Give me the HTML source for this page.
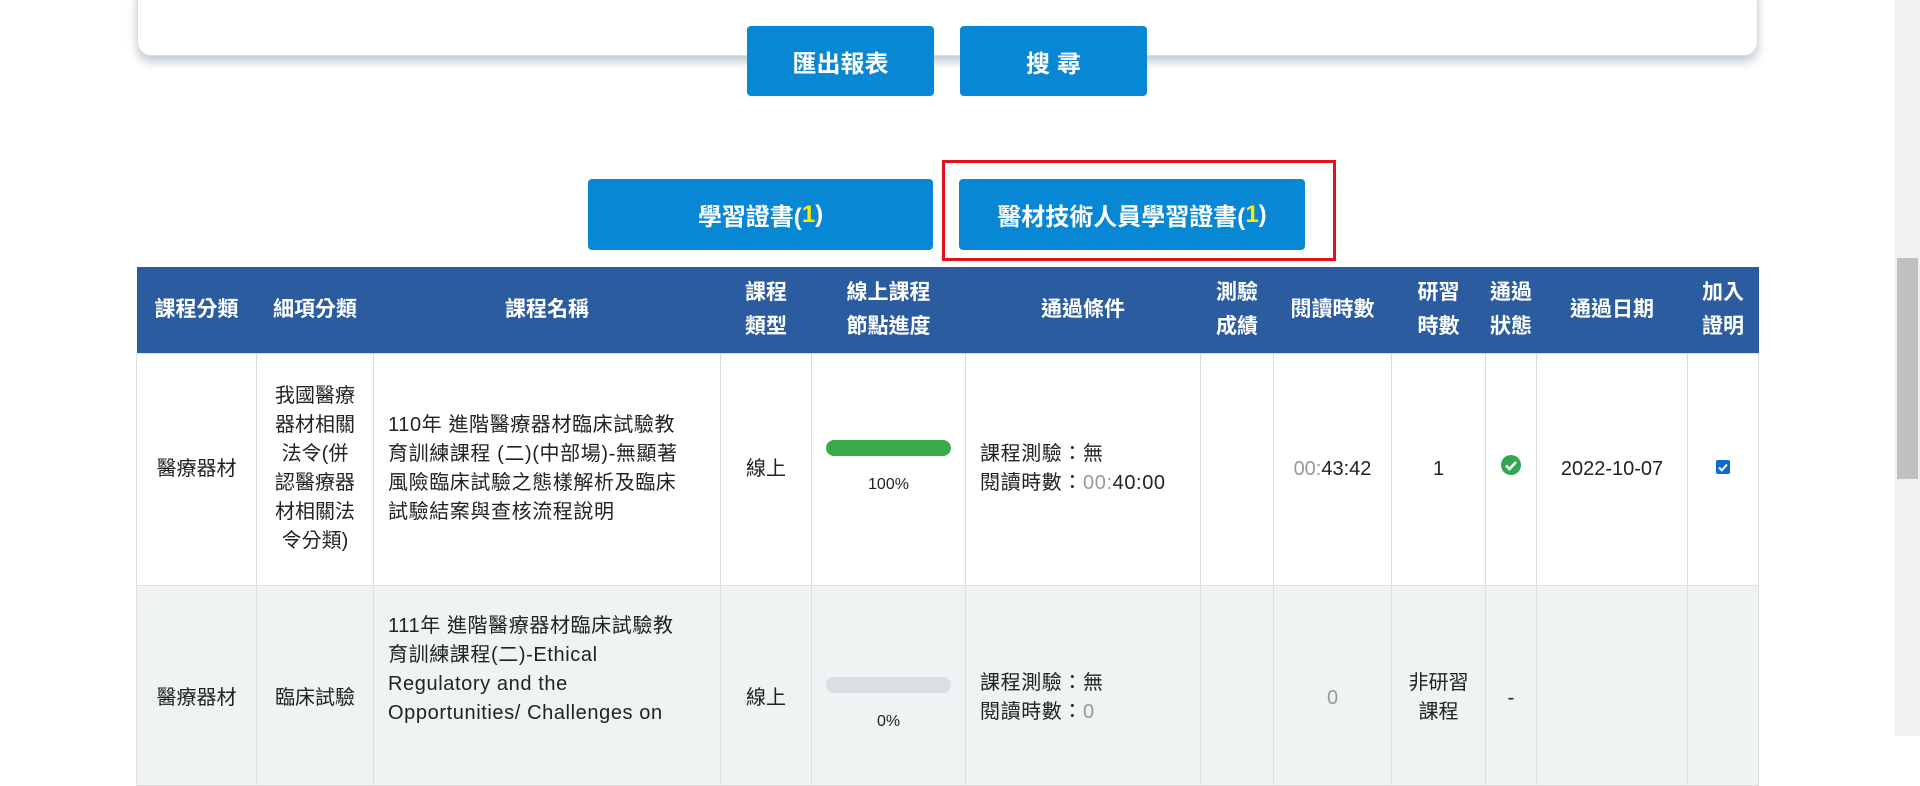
<!DOCTYPE html>
<html><head><meta charset="utf-8"><style>
*{box-sizing:border-box;margin:0;padding:0}
body{width:1920px;height:736px;overflow:hidden;background:#fff;font-family:"Liberation Sans","Noto Sans CJK TC",sans-serif;color:#222;position:relative}
.card{position:absolute;left:137px;top:-20px;width:1621px;height:76px;background:#fff;border:1px solid #d8dde2;border-radius:14px;box-shadow:0 6px 10px rgba(120,140,160,.45)}
.btn{position:absolute;background:#0887d4;color:#fff;font-weight:bold;font-size:24px;display:flex;align-items:center;justify-content:center;border-radius:4px}
.y{color:#ffeb00}
.red{position:absolute;left:942px;top:160px;width:394px;height:101px;border:3px solid #e3111b}
table{position:absolute;left:136px;top:267px;width:1622px;border-collapse:collapse;table-layout:fixed;font-size:20px}
th{background:#2b5c9f;color:#fff;font-weight:bold;font-size:21px;height:86px;line-height:34px;text-align:center;padding:0 2px}
td{border:1px solid #ddd;text-align:center;line-height:29px;padding:0 12px;white-space:nowrap}
tr.r1 td{height:232px;background:#fff}
tr.r2 td{height:200px;background:#eef3f3;vertical-align:top;padding-top:0}
td.l{text-align:left;padding:0 14px;letter-spacing:0.6px}
.bar{height:16px;border-radius:8px;margin:0 4px}
.g{color:#999}
.sb{position:absolute;left:1895px;top:0;width:25px;height:736px;background:#f1f1f1}
.th{position:absolute;left:1897px;top:258px;width:21px;height:221px;background:#c1c1c1}
</style></head><body>
<div class="card"></div>
<div class="btn" style="left:747px;top:26px;width:187px;height:70px">匯出報表</div>
<div class="btn" style="left:960px;top:26px;width:187px;height:70px">搜 尋</div>
<div class="btn" style="left:588px;top:179px;width:345px;height:71px">學習證書(<span class="y">1</span>)</div>
<div class="btn" style="left:959px;top:179px;width:346px;height:71px">醫材技術人員學習證書(<span class="y">1</span>)</div>
<div class="red"></div>
<table>
<colgroup><col style="width:120px"><col style="width:117px"><col style="width:347px"><col style="width:91px"><col style="width:154px"><col style="width:235px"><col style="width:73px"><col style="width:118px"><col style="width:94px"><col style="width:51px"><col style="width:151px"><col style="width:71px"></colgroup>
<tr><th>課程分類</th><th>細項分類</th><th>課程名稱</th><th>課程<br>類型</th><th>線上課程<br>節點進度</th><th>通過條件</th><th>測驗<br>成績</th><th>閱讀時數</th><th>研習<br>時數</th><th>通過<br>狀態</th><th>通過日期</th><th>加入<br>證明</th></tr>
<tr class="r1"><td style="padding:0 4px">醫療器材</td><td style="padding:0 4px">我國醫療<br>器材相關<br>法令(併<br>認醫療器<br>材相關法<br>令分類)</td><td class="l">110年 進階醫療器材臨床試驗教<br>育訓練課程 (二)(中部場)-無顯著<br>風險臨床試驗之態樣解析及臨床<br>試驗結案與查核流程說明</td><td>線上</td><td style="padding:0 10px"><div class="bar" style="background:#3aaa48"></div><div style="font-size:16px;margin-top:14px">100%</div></td><td class="l">課程測驗：無<br>閱讀時數：<span class="g">00:</span>40:00</td><td></td><td><span class="g">00:</span>43:42</td><td>1</td><td style="padding:0"><svg width="22" height="22" viewBox="0 0 22 22"><circle cx="11" cy="11" r="10" fill="#2fa84f"/><path d="M6 11.5l3.5 3.5 6.5-7" stroke="#fff" stroke-width="2.6" fill="none"/></svg></td><td>2022-10-07</td><td><svg width="16" height="16" viewBox="0 0 16 16"><rect x="1" y="1" width="14" height="14" rx="2" fill="#0b68d8"/><path d="M4 8.5l2.8 2.8L12 5.5" stroke="#fff" stroke-width="2" fill="none"/></svg></td></tr>
<tr class="r2"><td style="padding:98px 4px 0">醫療器材</td><td style="padding-top:98px">臨床試驗</td><td class="l" style="padding-top:26px">111年 進階醫療器材臨床試驗教<br>育訓練課程(二)-Ethical<br>Regulatory and the<br>Opportunities/ Challenges on</td><td style="padding-top:98px">線上</td><td style="padding:91px 10px 0"><div class="bar" style="background:#d9dfe4"></div><div style="font-size:16px;margin-top:14px">0%</div></td><td class="l" style="padding-top:83px">課程測驗：無<br>閱讀時數：<span class="g">0</span></td><td></td><td class="g" style="padding-top:98px">0</td><td style="padding:83px 4px 0">非研習<br>課程</td><td style="padding:98px 0 0">-</td><td></td><td></td></tr>
</table>
<div class="sb"></div><div class="th"></div>
</body></html>
